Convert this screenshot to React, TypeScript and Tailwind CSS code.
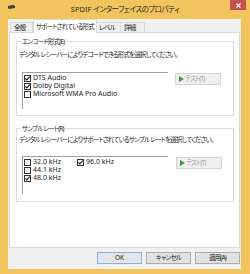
import React from 'react';

const font = "font-['Noto_Sans','Noto_Sans_CJK_JP',sans-serif]";

function J({ children }: { children: React.ReactNode }) {
  return <span className="tracking-[-0.8px] [font-feature-settings:'palt']">{children}</span>;
}

function Check({ checked }: { checked?: boolean }) {
  return (
    <svg width="7" height="7" viewBox="0 0 7 7" className="shrink-0">
      <rect x="0.5" y="0.5" width="6" height="6" fill="#fff" stroke="#333" />
      {checked && <path d="M1.4 3.4 L2.9 5 L5.6 1.6" fill="none" stroke="#111" strokeWidth="1.1" />}
    </svg>
  );
}

function Item({ label, checked }: { label: string; checked?: boolean }) {
  return (
    <div className="flex h-[8px] items-center gap-[2px] text-[7px] text-[#222]">
      <Check checked={checked} />
      <span>{label}</span>
    </div>
  );
}

function TestButton() {
  return (
    <div className="flex h-[12px] w-[46px] items-center gap-[1px] border border-[#d5d5d5] bg-[#efefef] pl-[3px] text-[#9c9c9c]">
      <svg width="5" height="6" viewBox="0 0 5 6">
        <path d="M0 0 L5 3 L0 6 Z" fill="#3a9f3a" />
      </svg>
      <J>テスト(T)</J>
    </div>
  );
}

function Group({ title, children }: { title: string; children: React.ReactNode }) {
  return (
    <fieldset className="border border-[#dcdcdc] px-[2px]">
      <legend className="ml-[2px] px-[1px] leading-[9px] text-[#222]">
        <J>{title}</J>
      </legend>
      {children}
    </fieldset>
  );
}

export default function App() {
  const tabs = ['全般', 'サポートされている形式', 'レベル', '詳細'];
  const widths = ['w-[23px]', 'w-[64px]', 'w-[25px]', 'w-[25px]'];

  return (
    <div className={`${font} flex h-[274px] w-[250px] flex-col bg-[#f1c45d] text-[6.5px] leading-[8px]`}>
      <div className="relative flex h-[19px] shrink-0 items-center justify-center text-[7.5px] text-[#2a2a2a]">
        <svg width="7" height="4" viewBox="0 0 7 4" className="absolute left-[8px] top-[5px]">
          <path d="M0 1 L5 0 L7 1 L7 3 L1 4 L0 3 Z" fill="#3b3f48" />
        </svg>
        <span className="-mt-[2px]">
          SPDIF <span className="tracking-[-0.5px] [font-feature-settings:'palt']">インターフェイスのプロパティ</span>
        </span>
        <div className="absolute right-[4px] top-0 flex h-[10px] w-[16px] items-center justify-center bg-[#c75050]">
          <svg width="5" height="5" viewBox="0 0 5 5">
            <path d="M0.5 0.5 L4.5 4.5 M4.5 0.5 L0.5 4.5" stroke="#fff" strokeWidth="1.3" />
          </svg>
        </div>
      </div>

      <div className="mx-[8px] mr-[9px] mb-[5px] flex flex-1 flex-col bg-[#f0f0f0]">
        <div className="flex h-[13px] items-end pl-[2px]">
          {tabs.map((t, i) =>
            i === 1 ? (
              <div
                key={t}
                className={`${widths[i]} relative z-10 -mb-[1px] flex h-[14px] items-center justify-center border border-b-0 border-[#d9d9d9] bg-white text-[#222]`}
              >
                <J>{t}</J>
              </div>
            ) : (
              <div
                key={t}
                className={`${widths[i]} flex h-[10px] items-center border border-b-0 border-[#d9d9d9] bg-[#f0f0f0] pl-[3px] text-[#222] ${i === 2 ? '-ml-[1px] border-l-0' : ''} ${i === 3 ? '-ml-[1px]' : ''}`}
              >
                <J>{t}</J>
              </div>
            )
          )}
        </div>

        <div className="mx-[1px] h-[216px] border border-[#d9d9d9] bg-white pl-[6px] pr-[5px]">
          <div className="mt-[4px]">
            <Group title="エンコード形式(E)">
              <div className="mt-[5px] text-[#222]">
                <J>デジタル レシーバーによりデコードできる形式を選択してください。</J>
              </div>
              <div className="mt-[13px] flex items-start pb-[6px] pl-[3px]">
                <div className="h-[37px] w-[146px] border-t border-l border-[#a0a0a0] pl-[1px] pt-[1px]">
                  <Item label="DTS Audio" checked />
                  <Item label="Dolby Digital" checked />
                  <Item label="Microsoft WMA Pro Audio" />
                </div>
                <div className="ml-[7px] mt-[1px]">
                  <TestButton />
                </div>
              </div>
            </Group>
          </div>

          <div className="mt-[8px]">
            <Group title="サンプル レート(R)">
              <div className="mt-[3px] text-[#222]">
                <J>デジタル レシーバーによりサポートされているサンプル レートを選択してください。</J>
              </div>
              <div className="mt-[12px] flex items-start pb-[7px] pl-[3px]">
                <div className="flex h-[38px] w-[146px] border-t border-l border-[#a0a0a0] pl-[1px] pt-[1px]">
                  <div className="w-[53px]">
                    <Item label="32.0 kHz" />
                    <Item label="44.1 kHz" />
                    <Item label="48.0 kHz" checked />
                  </div>
                  <div>
                    <Item label="96.0 kHz" checked />
                  </div>
                </div>
                <div className="ml-[8px] mt-[1px]">
                  <TestButton />
                </div>
              </div>
            </Group>
          </div>
        </div>

        <div className="mt-[4px] flex justify-end gap-[4px] pr-[1px]">
          <div className="flex h-[12px] w-[45px] items-center justify-center border border-[#7eb4ea] bg-[#e5e5e5] text-[#222]">
            OK
          </div>
          <div className="flex h-[12px] w-[45px] items-center justify-center border border-[#adadad] bg-[#e1e1e1] text-[#222]">
            <J>キャンセル</J>
          </div>
          <div className="flex h-[12px] w-[45px] items-center justify-center border border-[#adadad] bg-[#e1e1e1] text-[#222]">
            <J>適用(A)</J>
          </div>
        </div>
      </div>
    </div>
  );
}
